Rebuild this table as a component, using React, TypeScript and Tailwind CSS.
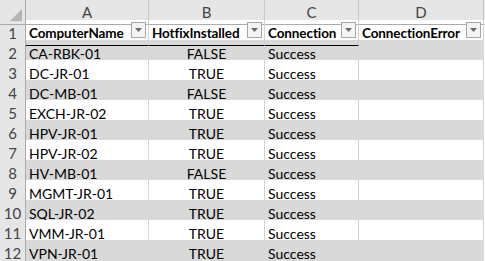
import React from 'react';

interface Row {
  name: string;
  hotfix: string;
  conn: string;
  err: string;
}

const ROWS: Row[] = [
  { name: 'CA-RBK-01', hotfix: 'FALSE', conn: 'Success', err: '' },
  { name: 'DC-JR-01', hotfix: 'TRUE', conn: 'Success', err: '' },
  { name: 'DC-MB-01', hotfix: 'FALSE', conn: 'Success', err: '' },
  { name: 'EXCH-JR-02', hotfix: 'TRUE', conn: 'Success', err: '' },
  { name: 'HPV-JR-01', hotfix: 'TRUE', conn: 'Success', err: '' },
  { name: 'HPV-JR-02', hotfix: 'TRUE', conn: 'Success', err: '' },
  { name: 'HV-MB-01', hotfix: 'FALSE', conn: 'Success', err: '' },
  { name: 'MGMT-JR-01', hotfix: 'TRUE', conn: 'Success', err: '' },
  { name: 'SQL-JR-02', hotfix: 'TRUE', conn: 'Success', err: '' },
  { name: 'VMM-JR-01', hotfix: 'TRUE', conn: 'Success', err: '' },
  { name: 'VPN-JR-01', hotfix: 'TRUE', conn: 'Success', err: '' },
];

const GRID = 'grid grid-cols-[26px_123px_116px_94px_125px_1px]';

function FilterButton() {
  return (
    <div className="absolute right-[2px] top-[2px] w-[15px] h-[16px] border border-[#a6a6a6] bg-[#f4f4f4] flex items-center justify-center">
      <svg width="7" height="4" viewBox="0 0 7 4">
        <path d="M0 0h7L3.5 4z" fill="#6b6b6b" />
      </svg>
    </div>
  );
}

export default function App() {
  return (
    <div className="w-[485px] h-[261px] overflow-hidden bg-white text-[14px] text-black" style={{ fontFamily: 'Lato, "Liberation Sans", sans-serif' }}>
      {/* Column letters */}
      <div className={`${GRID} h-[20px] bg-[#e6e6e6] text-[#444] text-[15px]`}>
        <div className="relative border-r border-b border-[#ababab]">
          <svg className="absolute right-[3px] bottom-[3px]" width="12" height="12" viewBox="0 0 12 12">
            <path d="M12 0v12H0z" fill="#b4b4b4" />
          </svg>
        </div>
        {['A', 'B', 'C', 'D'].map(l => (
          <div key={l} className="flex items-center justify-center pt-[1px] border-r border-b border-r-[#c8c8c8] border-b-[#ababab]">{l}</div>
        ))}
        <div className="border-b border-[#ababab]" />
      </div>

      {/* Table header row */}
      <div className={`${GRID} h-[20px]`}>
        <div className="flex items-center justify-center pt-[2px] bg-[#e6e6e6] text-[#444] text-[15px] border-r border-b border-r-[#ababab] border-b-[#d4d4d4]">1</div>
        {['ComputerName', 'HotfixInstalled', 'Connection', 'ConnectionError'].map(h => (
          <div key={h} className="relative flex items-center pl-[3px] pt-[2px] font-bold text-[13.5px] tracking-[-0.1px] border-r border-r-[#d4d4d4] border-b border-b-black">
            {h}
            <FilterButton />
          </div>
        ))}
        <div />
      </div>

      {/* Data rows */}
      {ROWS.map((r, i) => {
        const shaded = i % 2 === 0;
        const last = i === ROWS.length - 1;
        const cell = `flex items-center pt-[2px] border-r ${shaded ? 'bg-[#d9d9d9] border-r-[#d9d9d9]' : 'bg-white border-r-[#d4d4d4]'} ${last ? 'border-b border-b-black' : ''}`;
        return (
          <div key={r.name} className={`${GRID} h-[20px]`}>
            <div className="flex items-center justify-center pt-[2px] bg-[#e6e6e6] text-[#444] text-[15px] border-r border-b border-r-[#ababab] border-b-[#d4d4d4]">{i + 2}</div>
            <div className={`${cell} pl-[3px]`}>{r.name}</div>
            <div className={`${cell} justify-center`}>{r.hotfix}</div>
            <div className={`${cell} pl-[3px]`}>{r.conn}</div>
            <div className={`${cell} relative`}>
              {r.err}
              {last && (
                <svg className="absolute right-0 bottom-0" width="4" height="4" viewBox="0 0 4 4">
                  <path d="M4 0v4H0z" fill="#3f4fa8" />
                </svg>
              )}
            </div>
            <div />
          </div>
        );
      })}
    </div>
  );
}
